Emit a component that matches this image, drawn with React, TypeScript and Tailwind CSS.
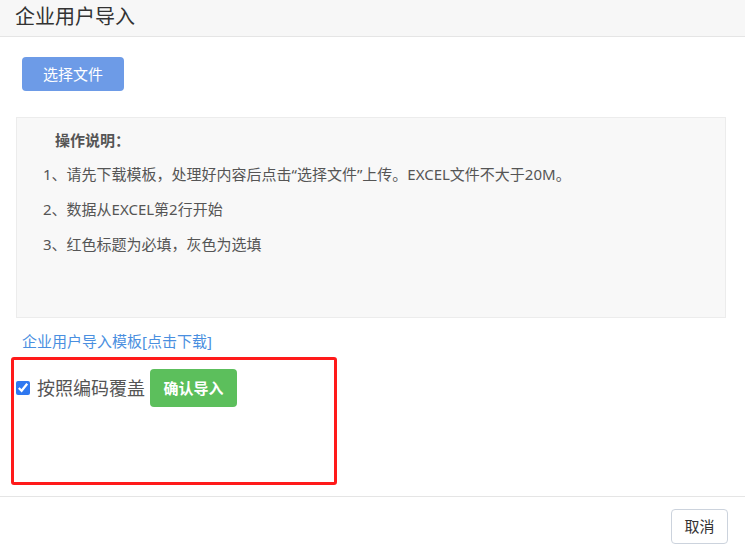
import { useState } from "react";

const font = { fontFamily: '"Noto Sans", "Noto Sans CJK SC", sans-serif' };

export default function App() {
  const [cover, setCover] = useState(true);

  return (
    <div className="h-[553px] w-[745px] overflow-hidden bg-white text-[#555]" style={font}>
      <div className="flex h-[37px] items-center border-b border-[#e5e5e5] bg-[#f7f7f7] pb-[2px] pl-[15px]">
        <h1 className="text-[20px] leading-none text-[#333]">企业用户导入</h1>
      </div>

      <div className="pt-[20px]">
        <button className="ml-[22px] h-[34px] w-[102px] rounded-[4px] bg-[#6d9be7] text-[15px] leading-none text-white">
          选择文件
        </button>

        <div className="ml-[16px] mt-[26px] h-[201px] w-[710px] border border-[#ececec] bg-[#f8f8f8] text-[15px]">
          <p className="ml-[38px] mt-[11px] font-bold leading-[22px] text-[#555]">操作说明：</p>
          <ul className="ml-[26px] mt-[12px] flex flex-col gap-[13px] leading-[22px]">
            <li>1、请先下载模板，处理好内容后点击“选择文件”上传。EXCEL文件不大于20M。</li>
            <li>2、数据从EXCEL第2行开始</li>
            <li>3、红色标题为必填，灰色为选填</li>
          </ul>
        </div>

        <a className="ml-[22px] mt-[13px] block text-[15px] leading-[20px] text-[#4a8fe0]" href="#">
          企业用户导入模板[点击下载]
        </a>

        <div className="ml-[11px] mt-[6px] h-[128px] w-[326px] rounded-[3px] border-[3px] border-[#ff1a1a] pl-[2px] pt-[9px]">
          <div className="flex items-center">
            <input
              type="checkbox"
              checked={cover}
              onChange={(e) => setCover(e.target.checked)}
              className="h-[14px] w-[14px] accent-[#2f78f0]"
            />
            <span className="ml-[7px] text-[18px] leading-none text-[#555]">按照编码覆盖</span>
            <button className="ml-[5px] h-[38px] w-[87px] rounded-[4px] bg-[#5cbf5c] text-[15px] font-bold leading-none text-white">
              确认导入
            </button>
          </div>
        </div>
      </div>

      <div className="mt-[11px] flex justify-end border-t border-[#e5e5e5] pr-[17px] pt-[12px]">
        <button className="h-[35px] w-[57px] rounded-[4px] border border-[#ccd3dd] bg-white text-[15px] leading-none text-[#333]">
          取消
        </button>
      </div>
    </div>
  );
}
